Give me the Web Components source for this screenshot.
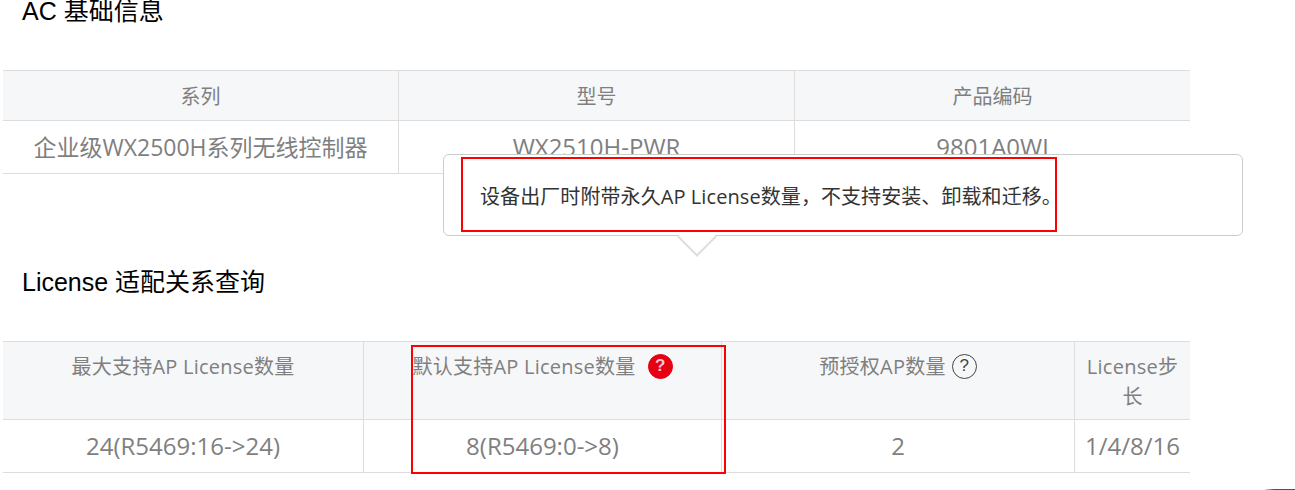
<!DOCTYPE html>
<html lang="zh-CN">
<head>
<meta charset="utf-8">
<title>AC License</title>
<style>
  html, body { margin: 0; height: 100%; overflow: hidden; background: #fff; }
  body { font-family: "Open Sans", "Noto Sans CJK SC", sans-serif; }
</style>
</head>
<body>
<license-page>
  <section-title>AC 基础信息</section-title>
  <spec-table style="--cols: 396px 396px 395px; --head: 50px">
    <spec-cell head>系列</spec-cell>
    <spec-cell head>型号</spec-cell>
    <spec-cell head last>产品编码</spec-cell>
    <spec-cell style="font-size: 23px">企业级WX2500H系列无线控制器</spec-cell>
    <spec-cell>WX2510H-PWR</spec-cell>
    <spec-cell last>9801A0WJ</spec-cell>
  </spec-table>

  <section-title style="--gap-top: 97px">License 适配关系查询</section-title>
  <spec-table style="--cols: 361px 358px 353px 115px; --head: 78px">
    <spec-cell head top>最大支持AP License数量</spec-cell>
    <spec-cell head top>默认支持AP License数量<help-badge filled style="--gap: 12px"></help-badge></spec-cell>
    <spec-cell head top>预授权AP数量<help-badge style="--gap: 6px"></help-badge></spec-cell>
    <spec-cell head top last>License步长</spec-cell>
    <spec-cell>24(R5469:16-&gt;24)</spec-cell>
    <spec-cell>8(R5469:0-&gt;8)</spec-cell>
    <spec-cell>2</spec-cell>
    <spec-cell last>1/4/8/16</spec-cell>
  </spec-table>

  <tip-popover>设备出厂时附带永久AP License数量，不支持安装、卸载和迁移。</tip-popover>
  <red-mark style="left: 461px; top: 157px; width: 592px; height: 71px"></red-mark>
  <red-mark style="left: 411px; top: 345px; width: 311px; height: 125px"></red-mark>
  <red-mark edge style="left: 1265px; top: 489px; width: 30px; height: 1px"></red-mark>
</license-page>

<script>
const define = (name, css, html) => {
  customElements.define(name, class extends HTMLElement {
    constructor() {
      super()
      this.attachShadow({ mode: 'open' }).innerHTML = `<style>${css}</style>${html}`
    }
  })
}

define('license-page', `
  :host {
    display: block;
    position: relative;
    width: 1295px;
    height: 490px;
    overflow: hidden;
    padding-left: 3px;
    box-sizing: border-box;
  }
`, `<slot></slot>`)

define('section-title', `
  :host {
    display: block;
    margin-top: var(--gap-top, 0);
    padding-left: 19px;
    height: 70px;
    box-sizing: border-box;
    color: #000;
    font: 25px/22px "Liberation Sans", "Noto Sans CJK SC", sans-serif;
  }
`, `<slot></slot>`)

define('spec-table', `
  :host {
    display: grid;
    grid-template-columns: var(--cols);
    grid-template-rows: var(--head) 53px;
    width: 1187px;
    border-top: 1px solid #ddd;
  }
`, `<slot></slot>`)

define('spec-cell', `
  :host {
    display: flex;
    justify-content: center;
    align-items: center;
    box-sizing: border-box;
    padding: 0 4px;
    border-right: 1px solid #ddd;
    border-bottom: 1px solid #ddd;
    color: #7f7f7f;
    font-size: 24px;
    line-height: 30px;
    text-align: center;
  }
  :host([last]) { border-right: 0; }
  :host([head]) { background: #f6f7f9; font-size: 20px; padding-top: 2px; }
  :host([top]) { align-items: flex-start; padding-top: 10px; letter-spacing: .25px; }
  div { min-width: 0; }
`, `<div><slot></slot></div>`)

define('help-badge', `
  :host {
    display: inline-block;
    vertical-align: top;
    margin-left: var(--gap, 6px);
    margin-top: 2px;
    width: 25px;
    height: 25px;
    box-sizing: border-box;
    border: 1.5px solid #444;
    border-radius: 50%;
    color: #444;
    font: 17px/22px "Liberation Sans", sans-serif;
    text-align: center;
    letter-spacing: 0;
  }
  :host([filled]) {
    background: #e60012;
    border-color: #e60012;
    color: #f7c6cb;
    font-weight: 700;
  }
`, `?`)

define('tip-popover', `
  :host {
    position: absolute;
    left: 443px;
    top: 154px;
    z-index: 2;
    display: flex;
    align-items: center;
    width: 800px;
    height: 82px;
    box-sizing: border-box;
    padding-left: 36px;
    background: #fff;
    border: 1px solid #ccc;
    border-radius: 6px;
    color: #333;
    font-size: 20px;
    letter-spacing: .08px;
    white-space: nowrap;
  }
  i {
    position: absolute;
    left: 239px;
    bottom: -16px;
    width: 28px;
    height: 28px;
    background: #fff;
    border-right: 2px solid #ddd;
    border-bottom: 2px solid #ddd;
    box-sizing: border-box;
    transform: rotate(45deg);
  }
`, `<slot></slot><i></i>`)

define('red-mark', `
  :host {
    position: absolute;
    z-index: 3;
    border: 2px solid #f00;
    pointer-events: none;
  }
  :host([edge]) {
    border: 0;
    background: linear-gradient(90deg, #f3d6d6, #c81e1e 30%);
  }
`, ``)
</script>
</body>
</html>
